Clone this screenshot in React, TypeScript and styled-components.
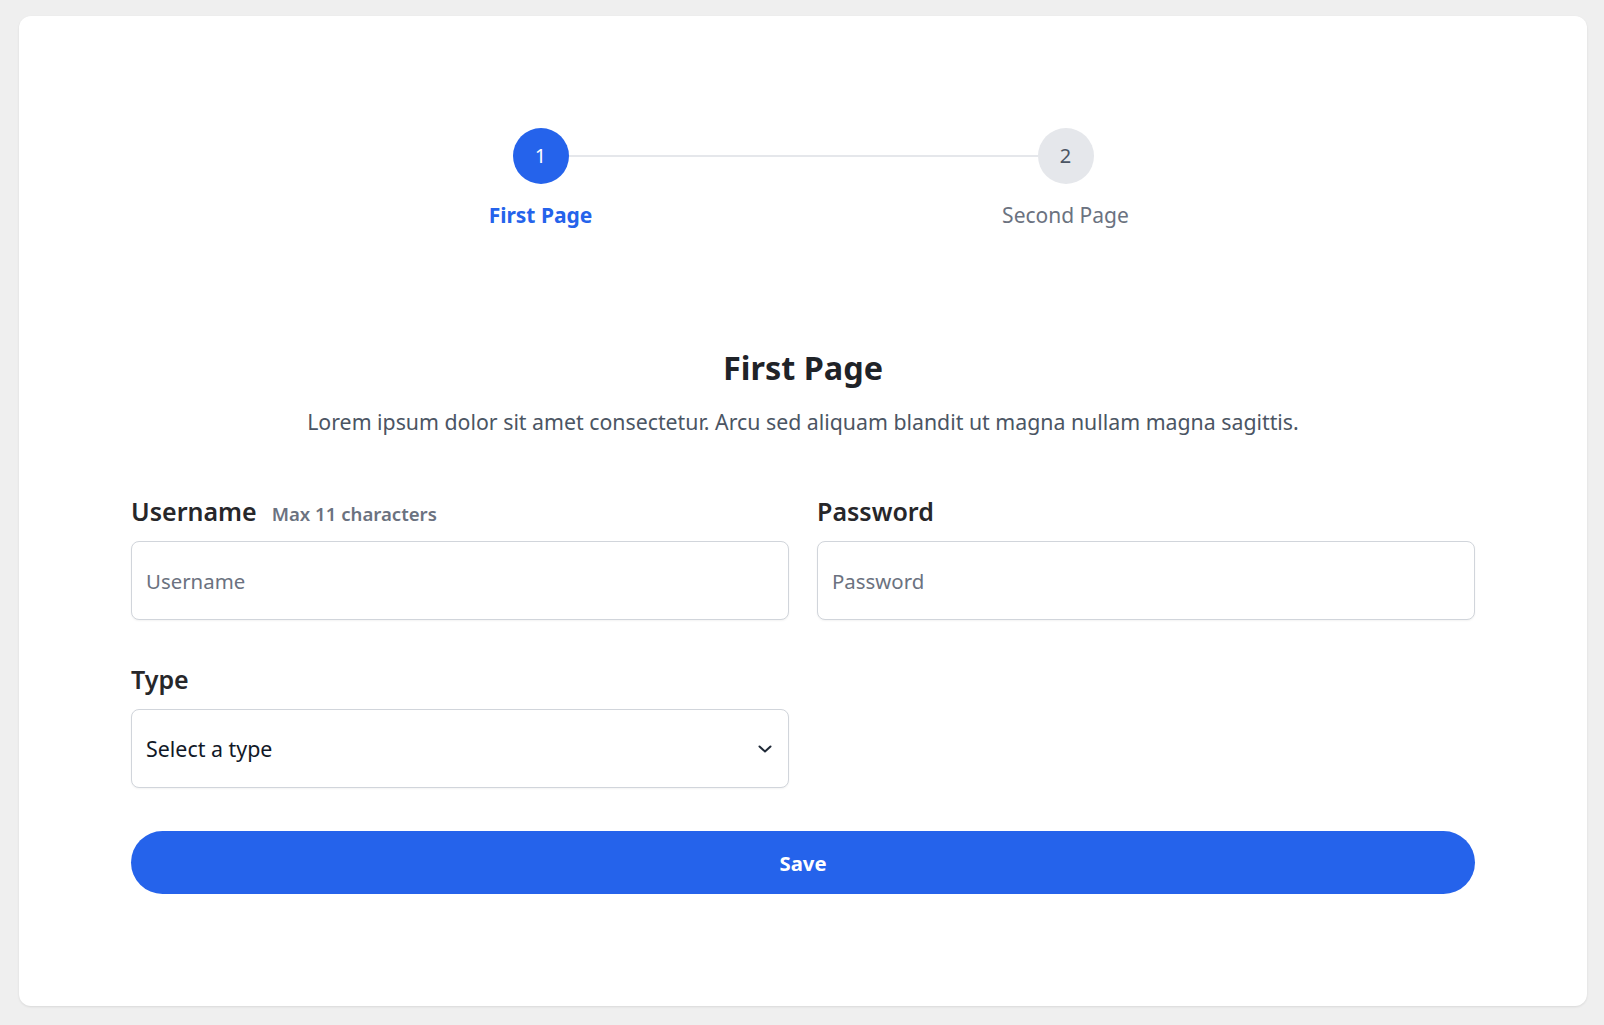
import React from "react";
import styled, { createGlobalStyle } from "styled-components";

const GlobalStyle = createGlobalStyle`
  *, *::before, *::after { box-sizing: border-box; }
  html, body { margin: 0; padding: 0; background: #efefef; }
  body {
    font-family: "Noto Sans", "Open Sans", sans-serif;
    color: #1f2937;
    -webkit-font-smoothing: antialiased;
  }
`;

const Page = styled.div`
  min-height: 1025px;
  padding: 16px 17px 19px 19px;
`;

const Card = styled.main`
  background: #ffffff;
  border-radius: 12px;
  box-shadow: 0 1px 3px rgba(0, 0, 0, 0.06), 0 1px 2px rgba(0, 0, 0, 0.04);
  padding: 112px 112px 112px;
  height: 990px;
  display: flex;
  flex-direction: column;
`;

const Stepper = styled.ol`
  list-style: none;
  margin: 0 auto;
  padding: 0;
  width: 100%;
  max-width: 1050px;
  display: grid;
  grid-template-columns: 1fr 1fr;
`;

const Step = styled.li`
  position: relative;
  display: flex;
  flex-direction: column;
  align-items: center;
  gap: 17px;

  &:not(:last-child)::after {
    content: "";
    position: absolute;
    top: 27px;
    left: calc(50% + 28px);
    width: calc(100% - 56px);
    height: 2px;
    background: #e5e7eb;
  }
`;

const StepCircle = styled.span<{ $active?: boolean }>`
  width: 56px;
  height: 56px;
  border-radius: 50%;
  display: flex;
  align-items: center;
  justify-content: center;
  font-size: 20px;
  line-height: 1;
  background: ${(p) => (p.$active ? "#2563eb" : "#e5e7eb")};
  color: ${(p) => (p.$active ? "#ffffff" : "#4b5563")};
`;

const StepLabel = styled.span<{ $active?: boolean }>`
  font-size: 21px;
  line-height: 28px;
  font-weight: ${(p) => (p.$active ? 700 : 400)};
  color: ${(p) => (p.$active ? "#2563eb" : "#6b7280")};
`;

const Heading = styled.h1`
  margin: 118px 0 0;
  text-align: center;
  font-size: 32.4px;
  line-height: 40px;
  font-weight: 700;
  color: #1f2328;
`;

const Lead = styled.p`
  margin: 19px 0 0;
  text-align: center;
  font-size: 21.3px;
  line-height: 32px;
  color: #4b5563;
`;

const Form = styled.form`
  margin-top: 57px;
  display: grid;
  grid-template-columns: 1fr 1fr;
  column-gap: 28px;
  row-gap: 43px;
`;

const Field = styled.div`
  display: flex;
  flex-direction: column;
  gap: 14px;
`;

const LabelRow = styled.div`
  display: flex;
  align-items: baseline;
  gap: 15px;
  height: 32px;
`;

const Label = styled.label`
  font-size: 25px;
  line-height: 32px;
  font-weight: 600;
  color: #27272a;
`;

const Hint = styled.span`
  font-size: 18.6px;
  font-weight: 600;
  color: #6b7280;
`;

const TextInput = styled.input`
  height: 79px;
  width: 100%;
  border: 1px solid #d1d5db;
  border-radius: 8px;
  padding: 0 14px;
  font-family: inherit;
  font-size: 20.4px;
  color: #111827;
  background: #fff;
  box-shadow: 0 1px 2px rgba(0, 0, 0, 0.05);
  outline: none;

  &::placeholder {
    color: #6b7280;
    opacity: 1;
  }
`;

const SelectBox = styled.div`
  height: 79px;
  border: 1px solid #d1d5db;
  border-radius: 8px;
  padding: 0 16px 0 14px;
  display: flex;
  align-items: center;
  justify-content: space-between;
  font-size: 21.4px;
  color: #111827;
  background: #fff;
  box-shadow: 0 1px 2px rgba(0, 0, 0, 0.05);
  cursor: pointer;
`;

const SaveButton = styled.button`
  grid-column: 1 / -1;
  height: 63px;
  border: none;
  border-radius: 9999px;
  background: #2563eb;
  color: #ffffff;
  font-family: inherit;
  font-size: 20.3px;
  font-weight: 700;
  cursor: pointer;
`;

const Chevron = () => (
  <svg width="14" height="8" viewBox="0 0 14 8" fill="none" aria-hidden="true">
    <path d="M1.5 1.5 L7 6.5 L12.5 1.5" stroke="#1f2937" strokeWidth="2" strokeLinecap="round" strokeLinejoin="round" />
  </svg>
);

export default function App() {
  return (
    <>
      <GlobalStyle />
      <Page>
        <Card>
          <Stepper>
            <Step>
              <StepCircle $active>1</StepCircle>
              <StepLabel $active>First Page</StepLabel>
            </Step>
            <Step>
              <StepCircle>2</StepCircle>
              <StepLabel>Second Page</StepLabel>
            </Step>
          </Stepper>

          <Heading>First Page</Heading>
          <Lead>
            Lorem ipsum dolor sit amet consectetur. Arcu sed aliquam blandit ut magna nullam magna sagittis.
          </Lead>

          <Form onSubmit={(e) => e.preventDefault()}>
            <Field>
              <LabelRow>
                <Label htmlFor="username">Username</Label>
                <Hint>Max 11 characters</Hint>
              </LabelRow>
              <TextInput id="username" placeholder="Username" maxLength={11} />
            </Field>
            <Field>
              <LabelRow>
                <Label htmlFor="password">Password</Label>
              </LabelRow>
              <TextInput id="password" type="password" placeholder="Password" />
            </Field>
            <Field>
              <LabelRow>
                <Label>Type</Label>
              </LabelRow>
              <SelectBox role="combobox">
                <span>Select a type</span>
                <Chevron />
              </SelectBox>
            </Field>
            <SaveButton type="submit">Save</SaveButton>
          </Form>
        </Card>
      </Page>
    </>
  );
}
